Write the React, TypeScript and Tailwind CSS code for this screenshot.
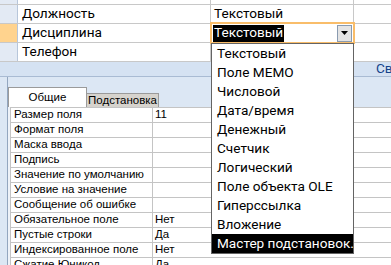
import React from "react";

const TYPES = [
  "Текстовый",
  "Поле MEMO",
  "Числовой",
  "Дата/время",
  "Денежный",
  "Счетчик",
  "Логический",
  "Поле объекта OLE",
  "Гиперссылка",
  "Вложение",
  "Мастер подстановок.",
];

const FIELDS = [
  { name: "Фамилия", type: "Текстовый" },
  { name: "Должность", type: "Текстовый" },
  { name: "Дисциплина", type: "", current: true },
  { name: "Телефон", type: "" },
];

const PROPS: [string, string][] = [
  ["Размер поля", "11"],
  ["Формат поля", ""],
  ["Маска ввода", ""],
  ["Подпись", ""],
  ["Значение по умолчанию", ""],
  ["Условие на значение", ""],
  ["Сообщение об ошибке", ""],
  ["Обязательное поле", "Нет"],
  ["Пустые строки", "Да"],
  ["Индексированное поле", "Нет"],
  ["Сжатие Юникод", "Да"],
];

const calibri = "font-['Roboto','Noto_Sans',sans-serif] text-[13.6px]";

export default function App() {
  return (
    <div className="relative w-[391px] h-[265px] overflow-hidden bg-white text-black">
      {/* таблица полей */}
      <div className={calibri}>
        {FIELDS.map((f, i) => (
          <div
            key={f.name}
            className={
              "grid grid-cols-[18px_193px_143px_1fr] h-[19px] border-b border-[#c8c8c8]" +
              (i === 0 ? " mt-[-14px]" : "")
            }
          >
            <div
              className={
                "border-r border-[#b7c6da] " +
                (f.current ? "bg-[#ffd38e]" : "bg-[#e3eaf4]")
              }
            />
            <div className="border-r border-[#c8c8c8] pl-[4px] flex items-center leading-none">
              {f.name}
            </div>
            <div className="border-r border-[#c8c8c8] pl-[3px] flex items-center leading-none">
              {f.type}
            </div>
            <div />
          </div>
        ))}
      </div>

      {/* заголовок "Свойства поля" */}
      <div
        className={
          "h-[15px] bg-[#d5e2f2] border-b border-[#a9bbd3] flex items-center pl-[376px] text-[#15428b] whitespace-nowrap leading-none " +
          calibri
        }
      >
        Свойства поля
      </div>

      {/* свойства */}
      <div className="flex h-[200px] bg-[#dce7f4] font-['Liberation_Sans',sans-serif] text-[11.5px]">
        <div className="w-[8px] shrink-0 border-r border-[#93a6bf]" />
        <div className="flex-1 min-w-0 pt-[10px]">
          <div className="flex items-end h-[20px]">
            <div className="w-[79px] h-[20px] bg-white border border-b-0 border-[#9a9a9a] flex items-center justify-center">
              Общие
            </div>
            <div className="w-[72px] h-[14px] bg-[#d6d3cd] border border-b-0 border-l-0 border-[#9a9a9a] flex items-center justify-center leading-none whitespace-nowrap">
              Подстановка
            </div>
          </div>
          <div className="bg-[#eef2f8] pl-[2px] h-full">
            <div className="bg-white border-l border-t border-[#c4c4c4]">
              {PROPS.map(([k, v]) => (
                <div
                  key={k}
                  className="grid grid-cols-[142px_1fr] h-[15px] border-b border-[#c4c4c4] leading-none"
                >
                  <div className="border-r border-[#c4c4c4] pl-[3px] flex items-center whitespace-nowrap">
                    {k}
                  </div>
                  <div className="pl-[2px] flex items-center">{v}</div>
                </div>
              ))}
            </div>
          </div>
        </div>
      </div>

      {/* раскрытый список типов данных */}
      <div className={"absolute left-[210px] top-[22px] w-[145px] " + calibri}>
        <div className="h-[22px] border-2 border-[#f9bd6a] bg-white flex items-center px-[1px]">
          <span className="bg-black text-white h-[17px] flex items-center px-[1px] leading-none">
            Текстовый
          </span>
          <span className="ml-auto w-[15px] h-[17px] bg-[#e4e4e4] border border-[#8a9bb0] flex items-center justify-center">
            <svg width="7" height="4" viewBox="0 0 7 4">
              <path d="M0 0h7L3.5 4z" fill="#000" />
            </svg>
          </span>
        </div>
        <div className="border border-[#646464] bg-white mx-[1px] -mt-[1px]">
          {TYPES.map((t, i) => (
            <div
              key={t}
              className={
                "h-[19px] flex items-center pl-[5px] leading-none whitespace-nowrap " +
                (i === TYPES.length - 1 ? "bg-black text-white" : "")
              }
            >
              {t}
            </div>
          ))}
        </div>
      </div>
    </div>
  );
}
